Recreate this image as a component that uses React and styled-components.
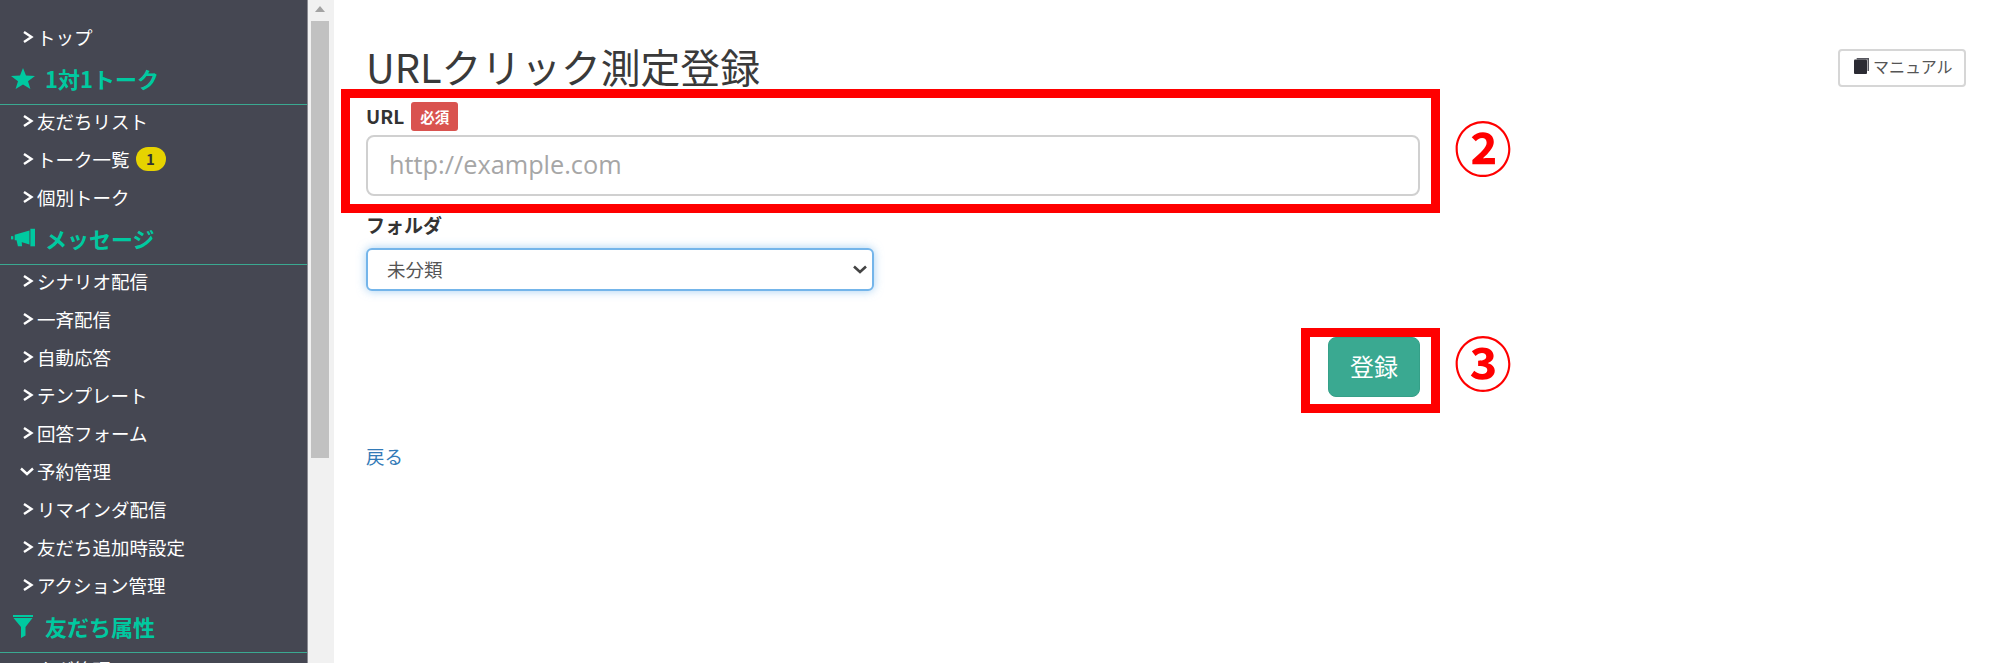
import React from 'react';
import styled, { createGlobalStyle } from 'styled-components';

const StarIcon = () => (
    <svg width="24" height="21" viewBox="0 0 24 21" fill="currentColor">
        <polygon points="12,0 15,7.6 24,8 17,13.2 19.4,21 12,16.4 4.6,21 7,13.2 0,8 9,7.6" />
    </svg>
);

const HornIcon = () => (
    <svg width="26" height="20" viewBox="0 0 26 20" fill="currentColor">
        <path d="M0 8h2.5v3.5H0z" />
        <path d="M4 6.5 20 2v15L12 14.5H11.6L12 19H7.5L6 12.5H4z" />
        <path d="M21 0h5v19h-5z" />
    </svg>
);

const FunnelIcon = () => (
    <svg width="20" height="23" viewBox="0 0 20 23" fill="currentColor">
        <path d="M0 0h20v2H0z" />
        <path d="M0.5 3h19L12.5 12v8.5L8 23V12z" />
    </svg>
);

const BookIcon = () => (
    <svg width="15" height="16" viewBox="0 0 15 16">
        <path d="M2.5 0H15v13h-1.5V1.5H3z" fill="#56565e" />
        <rect x="0" y="1.5" width="13" height="14.5" rx="1" fill="#2b2b33" />
    </svg>
);

const menu = [
    { label: 'トップ' },
    {
        title: '1対1トーク',
        icon: <StarIcon />,
        items: [{ label: '友だちリスト' }, { label: 'トーク一覧', badge: 1 }, { label: '個別トーク' }],
    },
    {
        title: 'メッセージ',
        icon: <HornIcon />,
        items: [
            { label: 'シナリオ配信' },
            { label: '一斉配信' },
            { label: '自動応答' },
            { label: 'テンプレート' },
            { label: '回答フォーム' },
            { label: '予約管理', open: true },
            { label: 'リマインダ配信' },
            { label: '友だち追加時設定' },
            { label: 'アクション管理' },
        ],
    },
    {
        title: '友だち属性',
        icon: <FunnelIcon />,
        items: [{ label: 'タグ管理' }],
    },
];

const Chevron = ({ open }) => (
    <ChevronBox>
        <svg width="16" height="14" viewBox="0 0 16 14" fill="none" stroke="#fff" strokeWidth="2.4">
            <path d={open ? 'M1 4.5 7 10 13 4.5' : 'M4 2 11.5 7 4 12'} />
        </svg>
    </ChevronBox>
);

const MenuItem = ({ item }) => (
    <Item>
        <Chevron open={item.open} />
        {item.label}
        {item.badge && <Badge>{item.badge}</Badge>}
    </Item>
);

const App = () => {
    return (
        <Page>
            <GlobalStyle />
            <Sidebar>
                {menu.map((entry) =>
                    entry.title ? (
                        <div key={entry.title}>
                            <SectionTitle>
                                <SectionIcon>{entry.icon}</SectionIcon>
                                {entry.title}
                            </SectionTitle>
                            {entry.items.map((item) => (
                                <MenuItem key={item.label} item={item} />
                            ))}
                        </div>
                    ) : (
                        <MenuItem key={entry.label} item={entry} />
                    ),
                )}
            </Sidebar>
            <ScrollTrack>
                <ScrollArrow />
                <ScrollThumb />
            </ScrollTrack>
            <Main>
                <Header>
                    <Title>URLクリック測定登録</Title>
                    <ManualButton>
                        <BookIcon />
                        マニュアル
                    </ManualButton>
                </Header>
                <Form>
                    <UrlField>
                        <Label>
                            URL<Required>必須</Required>
                        </Label>
                        <UrlInput placeholder="http://example.com" />
                        <RedFrame />
                        <Circled $shift={3}>②</Circled>
                    </UrlField>
                    <FolderField>
                        <Label>フォルダ</Label>
                        <SelectWrap>
                            <FolderSelect defaultValue="未分類">
                                <option>未分類</option>
                            </FolderSelect>
                            <SelectArrow width="14" height="9" viewBox="0 0 14 9" fill="none" stroke="#444" strokeWidth="2.6">
                                <path d="M1 1.5 7 7 13 1.5" />
                            </SelectArrow>
                        </SelectWrap>
                    </FolderField>
                    <Actions>
                        <SubmitWrap>
                            <SubmitButton type="button">登録</SubmitButton>
                            <SubmitFrame />
                            <Circled $shift={6}>③</Circled>
                        </SubmitWrap>
                    </Actions>
                </Form>
                <BackLink href="#">戻る</BackLink>
            </Main>
        </Page>
    );
};

export default App;

const GlobalStyle = createGlobalStyle`
    html, body {
        margin: 0;
        height: 100%;
        background: #fff;
        overflow: hidden;
    }
    body {
        font-family: "Noto Sans CJK JP", "Open Sans", sans-serif;
    }
    * {
        box-sizing: border-box;
    }
`;

const Page = styled.div`
    display: flex;
    height: 663px;
    overflow: hidden;
`;

const Sidebar = styled.nav`
    width: 308px;
    flex: none;
    padding-top: 21px;
    background: #454752;
    border-right: 1px solid #8a8b92;
    overflow: hidden;
`;

const Item = styled.div`
    display: flex;
    align-items: center;
    height: 38px;
    padding: 0 0 6px 20px;
    color: #fff;
    font-size: 18.5px;
    line-height: 30px;
`;

const ChevronBox = styled.span`
    display: flex;
    width: 17px;
    flex: none;
`;

const Badge = styled.span`
    display: inline-flex;
    align-items: center;
    justify-content: center;
    width: 30px;
    height: 24px;
    margin-left: 6px;
    border-radius: 12px;
    background: #e6d300;
    color: #333;
    font-size: 15px;
    font-weight: 700;
`;

const SectionTitle = styled.div`
    display: flex;
    align-items: center;
    height: 46px;
    padding: 0 0 7px 11px;
    border-bottom: 1px solid #3aa991;
    color: #00c9a0;
    font-size: 22px;
    font-weight: 700;
`;

const SectionIcon = styled.span`
    display: flex;
    justify-content: center;
    width: 24px;
    margin-right: 10px;
`;

const ScrollTrack = styled.div`
    width: 26px;
    flex: none;
    padding: 0 5px 0 3px;
    background: #f1f1f1;
`;

const ScrollArrow = styled.div`
    width: 0;
    height: 0;
    margin: 6px auto 9px;
    border-left: 5px solid transparent;
    border-right: 5px solid transparent;
    border-bottom: 6px solid #a3a3a3;
`;

const ScrollThumb = styled.div`
    height: 437px;
    background: #c1c1c1;
`;

const Main = styled.main`
    flex: 1;
    padding: 44px 34px 0 32px;
    color: #333;
`;

const Header = styled.div`
    display: flex;
    align-items: flex-start;
    justify-content: space-between;
`;

const Title = styled.h1`
    margin: 0;
    color: #3a3a3a;
    font-size: 39.8px;
    font-weight: 400;
    line-height: 44px;
`;

const ManualButton = styled.button`
    display: flex;
    align-items: center;
    gap: 4px;
    width: 128px;
    height: 38px;
    margin-top: 5px;
    padding: 0 0 5px 14px;
    border: 2px solid #d6d6d6;
    border-radius: 4px;
    background: #fff;
    color: #555;
    font-family: inherit;
    font-size: 16px;
`;

const Form = styled.form`
    width: 1054px;
    margin-top: 13px;
`;

const UrlField = styled.div`
    position: relative;
`;

const FolderField = styled.div`
    margin-top: 14px;
`;

const Label = styled.label`
    display: flex;
    align-items: center;
    height: 28px;
    color: #333;
    font-size: 19px;
    font-weight: 700;
`;

const Required = styled.span`
    display: inline-flex;
    align-items: center;
    justify-content: center;
    width: 47px;
    height: 29px;
    margin: 2px 0 0 7px;
    border-radius: 3px;
    background: #d9534f;
    color: #fff;
    font-size: 14.5px;
    font-weight: 700;
`;

const UrlInput = styled.input`
    display: block;
    width: 100%;
    height: 61px;
    margin-top: 6px;
    padding: 0 21px 4px;
    border: 2px solid #d0d0d0;
    border-radius: 8px;
    outline: none;
    font-family: "Open Sans", sans-serif;
    font-size: 25.3px;

    &::placeholder {
        color: #a6a6a6;
    }
`;

const SelectWrap = styled.div`
    position: relative;
    width: 508px;
    margin-top: 10px;
`;

const FolderSelect = styled.select`
    display: block;
    width: 100%;
    height: 43px;
    padding: 0 19px 2px;
    border: 2px solid #74b5ea;
    border-radius: 6px;
    outline: none;
    appearance: none;
    background-color: #fff;
    box-shadow: 0 0 10px rgba(102, 175, 233, 0.6);
    color: #555;
    font-family: inherit;
    font-size: 18.5px;
`;

const SelectArrow = styled.svg`
    position: absolute;
    top: 17px;
    right: 7px;
`;

const Actions = styled.div`
    display: flex;
    justify-content: flex-end;
    margin-top: 46px;
`;

const SubmitWrap = styled.div`
    position: relative;
`;

const SubmitButton = styled.button`
    display: block;
    width: 92px;
    height: 60px;
    padding: 0 0 4px;
    border: 1px solid #35a088;
    border-radius: 8px;
    background: #3aa991;
    color: #fff;
    font-family: inherit;
    font-size: 24px;
`;

const RedFrame = styled.div`
    position: absolute;
    top: -12px;
    right: -20px;
    bottom: -17px;
    left: -25px;
    border: 9px solid #f00;
    pointer-events: none;
`;

const SubmitFrame = styled(RedFrame)`
    top: -9px;
    bottom: -16px;
    left: -27px;
`;

const Circled = styled.span`
    position: absolute;
    top: 50%;
    left: calc(100% + 34px);
    color: #f00;
    font-size: 58px;
    font-weight: 700;
    line-height: 1;
    transform: translateY(calc(-50% - ${(p) => p.$shift}px));
`;

const BackLink = styled.a`
    display: block;
    margin-top: 46px;
    color: #337ab7;
    font-size: 18.5px;
    text-decoration: none;
`;
